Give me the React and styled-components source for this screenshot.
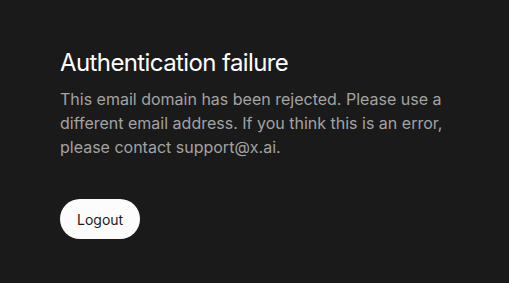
import React from "react";
import styled, { createGlobalStyle } from "styled-components";

const GlobalStyle = createGlobalStyle`
  html, body {
    margin: 0;
    padding: 0;
    background: #1a1a1a;
    font-family: Inter, "Noto Sans", sans-serif;
  }
`;

const Page = styled.div`
  min-height: 100vh;
  box-sizing: border-box;
  padding: 47px 60px;
  display: flex;
  flex-direction: column;
  align-items: flex-start;
`;

const Title = styled.h1`
  margin: 0 0 8px;
  font-size: 24px;
  line-height: 32px;
  font-weight: 400;
  letter-spacing: -0.025em;
  color: #ffffff;
`;

const Message = styled.p`
  margin: 0;
  max-width: 400px;
  font-size: 16px;
  line-height: 24px;
  color: #a3a3a3;
`;

const Button = styled.button`
  margin-top: 40px;
  height: 40px;
  padding: 0 17px;
  border: none;
  border-radius: 999px;
  background: #fcfcfc;
  color: #1a1a1a;
  font-family: inherit;
  font-size: 14px;
  font-weight: 400;
  cursor: pointer;
`;

export default function App() {
  return (
    <>
      <GlobalStyle />
      <Page>
        <Title>Authentication failure</Title>
        <Message>
          This email domain has been rejected. Please use a different email
          address. If you think this is an error, please contact support@x.ai.
        </Message>
        <Button>Logout</Button>
      </Page>
    </>
  );
}
